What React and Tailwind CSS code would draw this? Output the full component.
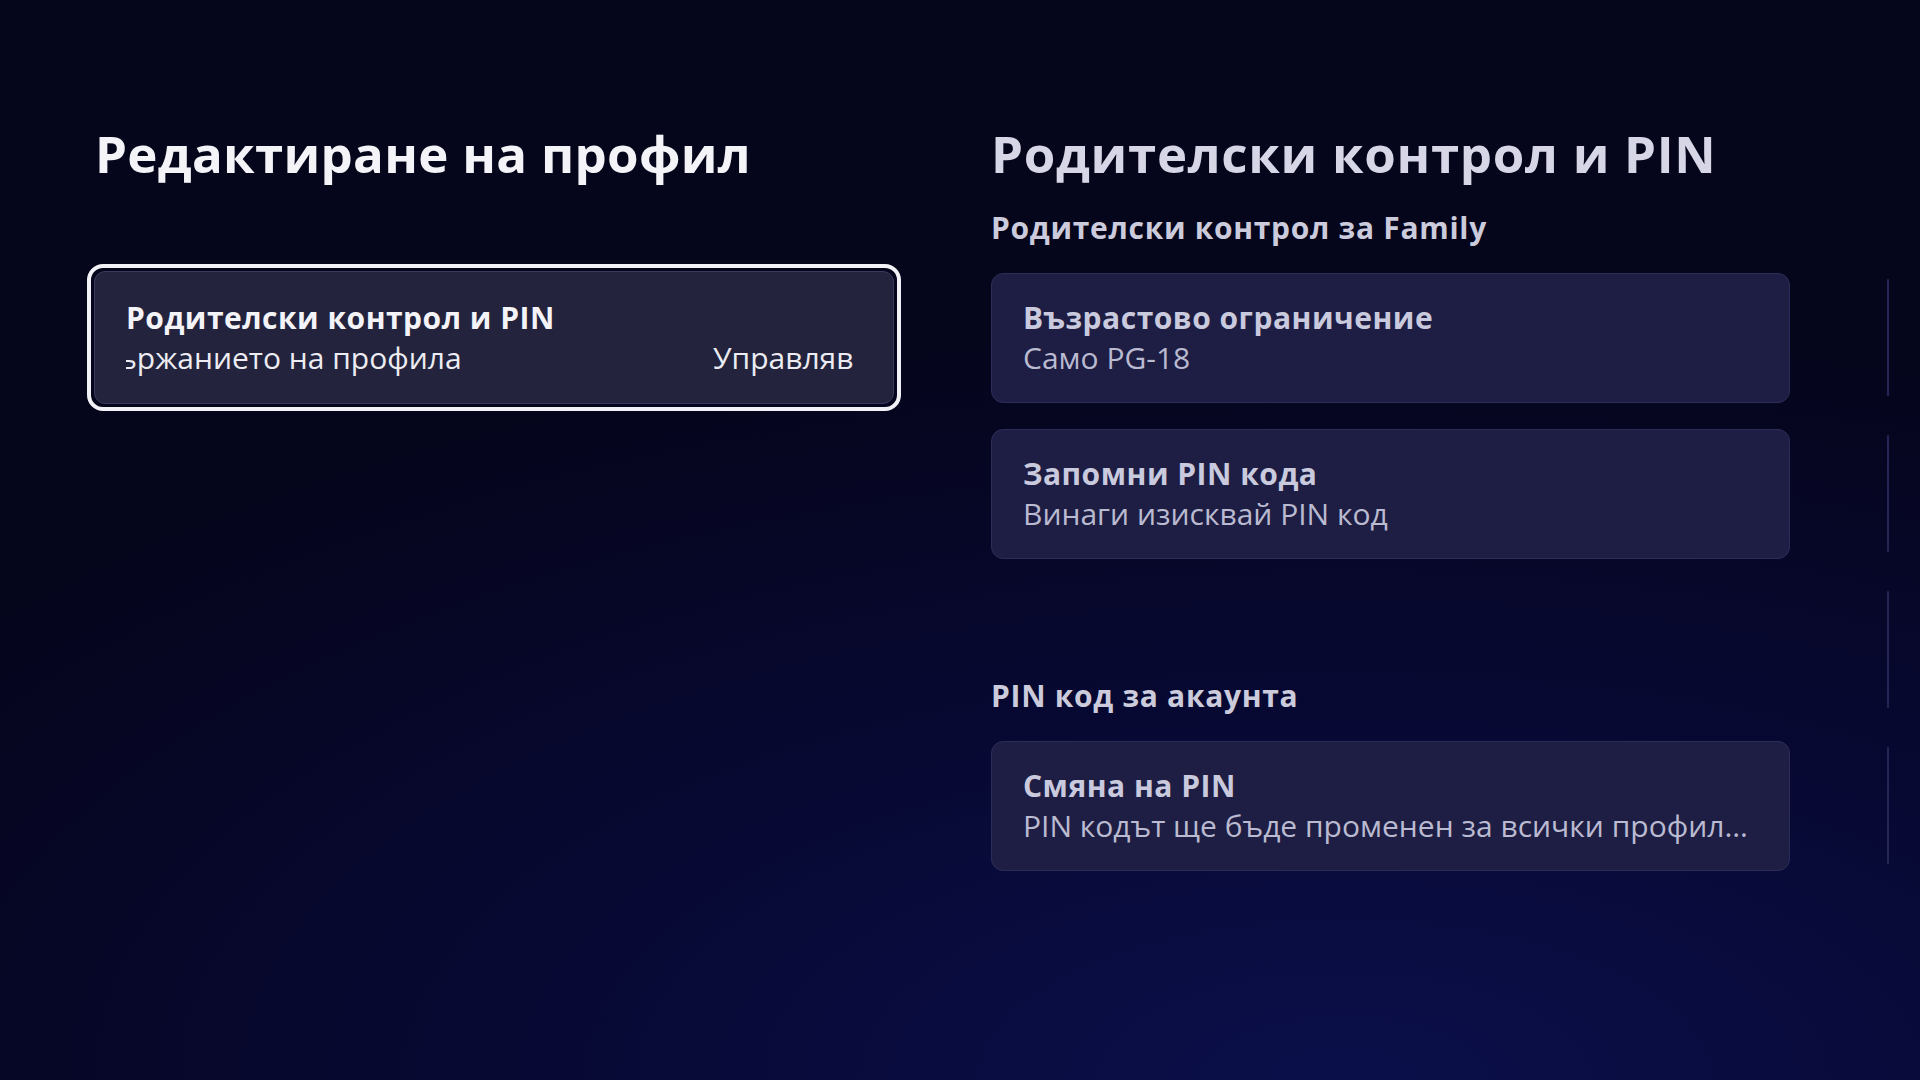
import React from "react";

function Card({ title, subtitle }) {
  return (
    <div className="h-[130px] w-[799px] rounded-[12px] border border-[#2c2c58] bg-[#1e1e44] px-[31px] flex flex-col justify-center">
      <div className="text-[30px] leading-[40px] font-bold tracking-[0.5px] text-[#cacade] whitespace-nowrap">{title}</div>
      <div className="text-[30px] leading-[40px] text-[#babad0] truncate">{subtitle}</div>
    </div>
  );
}

export default function App() {
  return (
    <div
      lang="bg"
      className="w-[1920px] h-[1080px] overflow-hidden bg-[#06061f] bg-[radial-gradient(ellipse_90%_70%_at_70%_100%,#0b0f4a_0%,#070830_55%,#05051c_100%)] flex pt-[123px] pl-[87px]"
      style={{ fontFamily: "'Open Sans', 'Liberation Sans', sans-serif" }}
    >
      {/* Left column */}
      <div className="w-[814px] shrink-0 flex flex-col">
        <h1 className="ml-[8px] text-[51px] leading-[60px] font-bold tracking-[0.3px] text-[#f4f4f8] whitespace-nowrap">
          Редактиране на профил
        </h1>
        <div className="mt-[81px] rounded-[16px] border-4 border-[#f2f2f6] p-[3px]">
          <div className="h-[133px] rounded-[11px] border border-[#3a3a5c] bg-[#23233d] pl-[31px] pr-[40px] flex flex-col justify-center">
            <div className="text-[30px] leading-[40px] font-bold tracking-[0.5px] text-[#f4f4f8] whitespace-nowrap">
              Родителски контрол и PIN
            </div>
            <div className="grid grid-cols-[587px_1fr] overflow-hidden text-[30px] leading-[40px] text-[#ececf2] whitespace-nowrap">
              <div className="overflow-hidden">
                <span className="inline-block ml-[-62px]">съдържанието на профила</span>
              </div>
              <div className="overflow-hidden">
                <span>Управлявайте съдържанието на профила</span>
              </div>
            </div>
          </div>
        </div>
      </div>

      {/* Right column */}
      <div className="ml-[90px] w-[799px] shrink-0 flex flex-col">
        <h2 className="text-[51px] leading-[60px] font-bold tracking-[0.7px] text-[#d6d6e6] whitespace-nowrap">
          Родителски контрол и PIN
        </h2>
        <div className="mt-[25px] text-[30px] leading-[40px] font-bold tracking-[0.7px] text-[#cbcbdc] whitespace-nowrap">
          Родителски контрол за Family
        </div>
        <div className="mt-[25px] flex flex-col gap-[26px]">
          <Card title="Възрастово ограничение" subtitle="Само PG-18" />
          <Card title="Запомни PIN кода" subtitle="Винаги изисквай PIN код" />
        </div>
        <div className="mt-[117px] text-[30px] leading-[40px] font-bold tracking-[0.7px] text-[#cbcbdc] whitespace-nowrap">
          PIN код за акаунта
        </div>
        <div className="mt-[25px]">
          <Card title="Смяна на PIN" subtitle="PIN кодът ще бъде променен за всички профили и устройства" />
        </div>
      </div>

      {/* Next column edges */}
      <div className="ml-[97px] mt-[156px] flex flex-col gap-[39px]">
        <div className="h-[117px] w-[2px] rounded-full bg-[#262656]" />
        <div className="h-[117px] w-[2px] rounded-full bg-[#262656]" />
        <div className="h-[117px] w-[2px] rounded-full bg-[#262656]" />
        <div className="h-[117px] w-[2px] rounded-full bg-[#262656]" />
      </div>
    </div>
  );
}
